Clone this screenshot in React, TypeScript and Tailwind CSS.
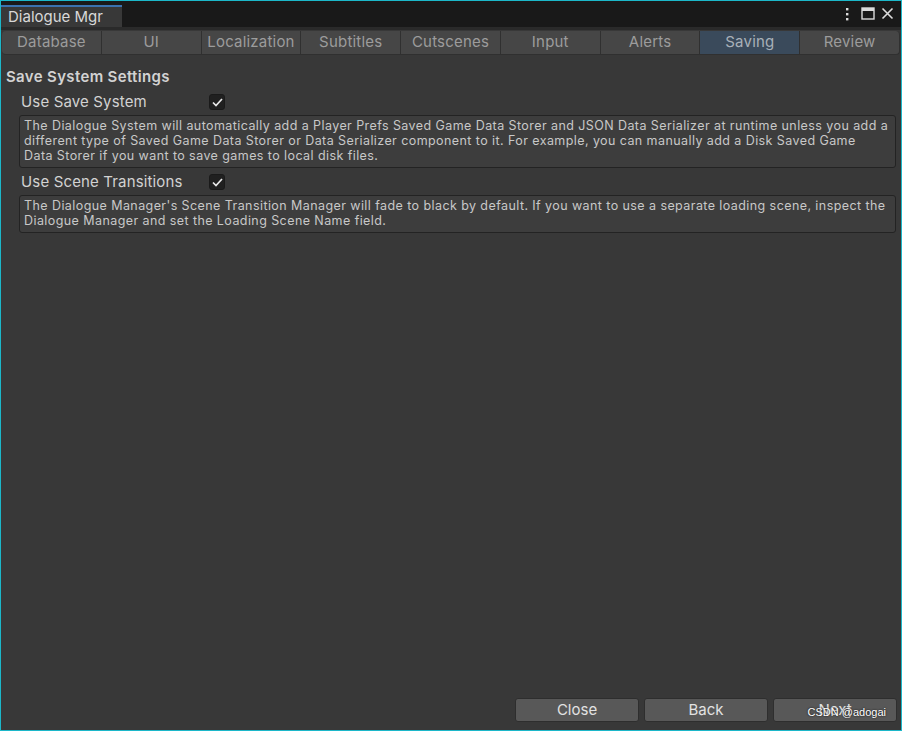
import { useState, type ReactNode } from "react";

const tabs = ["Database", "UI", "Localization", "Subtitles", "Cutscenes", "Input", "Alerts", "Saving", "Review"];

const Check = () => (
  <div className="w-[16px] h-[16px] rounded-[3px] bg-[#202020] border border-[#1a1a1a] flex items-center justify-center">
    <svg width="11" height="9" viewBox="0 0 11 9" fill="none">
      <path d="M1 4.5 L4 7.5 L10 1" stroke="#e8e8e8" strokeWidth="1.7" />
    </svg>
  </div>
);

const Toggle = ({ label, help }: { label: string; help: ReactNode }) => (
  <div className="flex flex-col">
    <div className="flex items-center h-[24px] pl-[20px]">
      <span className="w-[188px] text-[15px] tracking-[0.15px] text-[#d2d2d2]">{label}</span>
      <Check />
    </div>
    <div className="ml-[18px] mr-[4px] mt-[1px] rounded-[3px] border border-[#232323] bg-[#3d3d3d] pl-[4px] pr-[2px] pt-[2px] pb-[4px] text-[12.5px] leading-[15px] tracking-[0.42px] text-[#c8c8c8]">
      {help}
    </div>
  </div>
);

export default function App() {
  const [active, setActive] = useState("Saving");
  return (
    <div className="w-[902px] h-[731px] border border-[#1cb7c9] bg-[#383838] flex flex-col font-['Inter','Liberation_Sans',sans-serif] relative">
      <div className="h-[26px] bg-[#191919] flex items-end justify-between">
        <div className="w-[121px] h-[22px] bg-[#383838] border-t-2 border-[#3a72b0] flex items-center pl-[7px] text-[15px] text-[#d8d8d8]">
          Dialogue Mgr
        </div>
        <div className="flex items-center gap-[6px] h-[26px] pr-[7px] pb-[1px]">
          <svg width="4" height="14" viewBox="0 0 4 14">
            <rect x="1" y="1" width="2.4" height="2.4" fill="#dcdcdc" />
            <rect x="1" y="6" width="2.4" height="2.4" fill="#dcdcdc" />
            <rect x="1" y="11" width="2.4" height="2.4" fill="#dcdcdc" />
          </svg>
          <svg width="14" height="13" viewBox="0 0 14 13" className="ml-[6px]">
            <rect x="1" y="1" width="12" height="11" fill="none" stroke="#dcdcdc" strokeWidth="1.4" />
            <rect x="1" y="1" width="12" height="3" fill="#dcdcdc" />
          </svg>
          <svg width="13" height="13" viewBox="0 0 13 13">
            <path d="M1.5 1.5 L11.5 11.5 M11.5 1.5 L1.5 11.5" stroke="#dcdcdc" strokeWidth="1.6" />
          </svg>
        </div>
      </div>
      <div className="h-[3px] bg-[#2a2a2a]" />
      <div className="flex px-[1px] pt-[1px]">
        {tabs.map((t, i) => (
          <button
            key={t}
            onClick={() => setActive(t)}
            className={`w-[100px] h-[24px] text-[15px] tracking-[0.2px] border-r border-b border-[#303030] ${
              active === t ? "bg-[#3a4a5b] text-[#a8b0b8]" : "bg-[#464646] text-[#9c9c9c]"
            } ${i === tabs.length - 1 ? "rounded-r-[4px]" : ""} ${i === 0 ? "rounded-l-[4px]" : ""}`}
          >
            {t}
          </button>
        ))}
      </div>
      <div className="flex flex-col pt-[11px] pr-[1px]">
        <div className="pl-[5px] h-[22px] flex items-center text-[15px] font-semibold tracking-[0.35px] text-[#d2d2d2]">Save System Settings</div>
        <div className="mt-[2px] flex flex-col gap-[2px]">
          <Toggle
            label="Use Save System"
            help={
              <>
                The Dialogue System will automatically add a Player Prefs Saved Game Data Storer and JSON Data Serializer at runtime unless you add a different type of Saved Game Data Storer or Data Serializer component to it. For example, you can manually add a Disk Saved Game
                <br />
                Data Storer if you want to save games to local disk files.
              </>
            }
          />
          <Toggle
            label="Use Scene Transitions"
            help="The Dialogue Manager's Scene Transition Manager will fade to black by default. If you want to use a separate loading scene, inspect the Dialogue Manager and set the Loading Scene Name field."
          />
        </div>
      </div>
      <div className="flex-1" />
      <div className="flex justify-end gap-[5px] pr-[4px] pb-[8px]">
        {["Close", "Back", "Next"].map((b) => (
          <button
            key={b}
            className="w-[124px] h-[24px] rounded-[3px] bg-[#585858] border border-[#2e2e2e] text-[15px] text-[#e2e2e2]"
          >
            {b}
          </button>
        ))}
      </div>
      <span className="absolute right-[15px] bottom-[10px] text-[11px] text-white font-['Liberation_Sans',sans-serif] [text-shadow:0_0_2px_#000]">
        CSDN @adogai
      </span>
    </div>
  );
}
